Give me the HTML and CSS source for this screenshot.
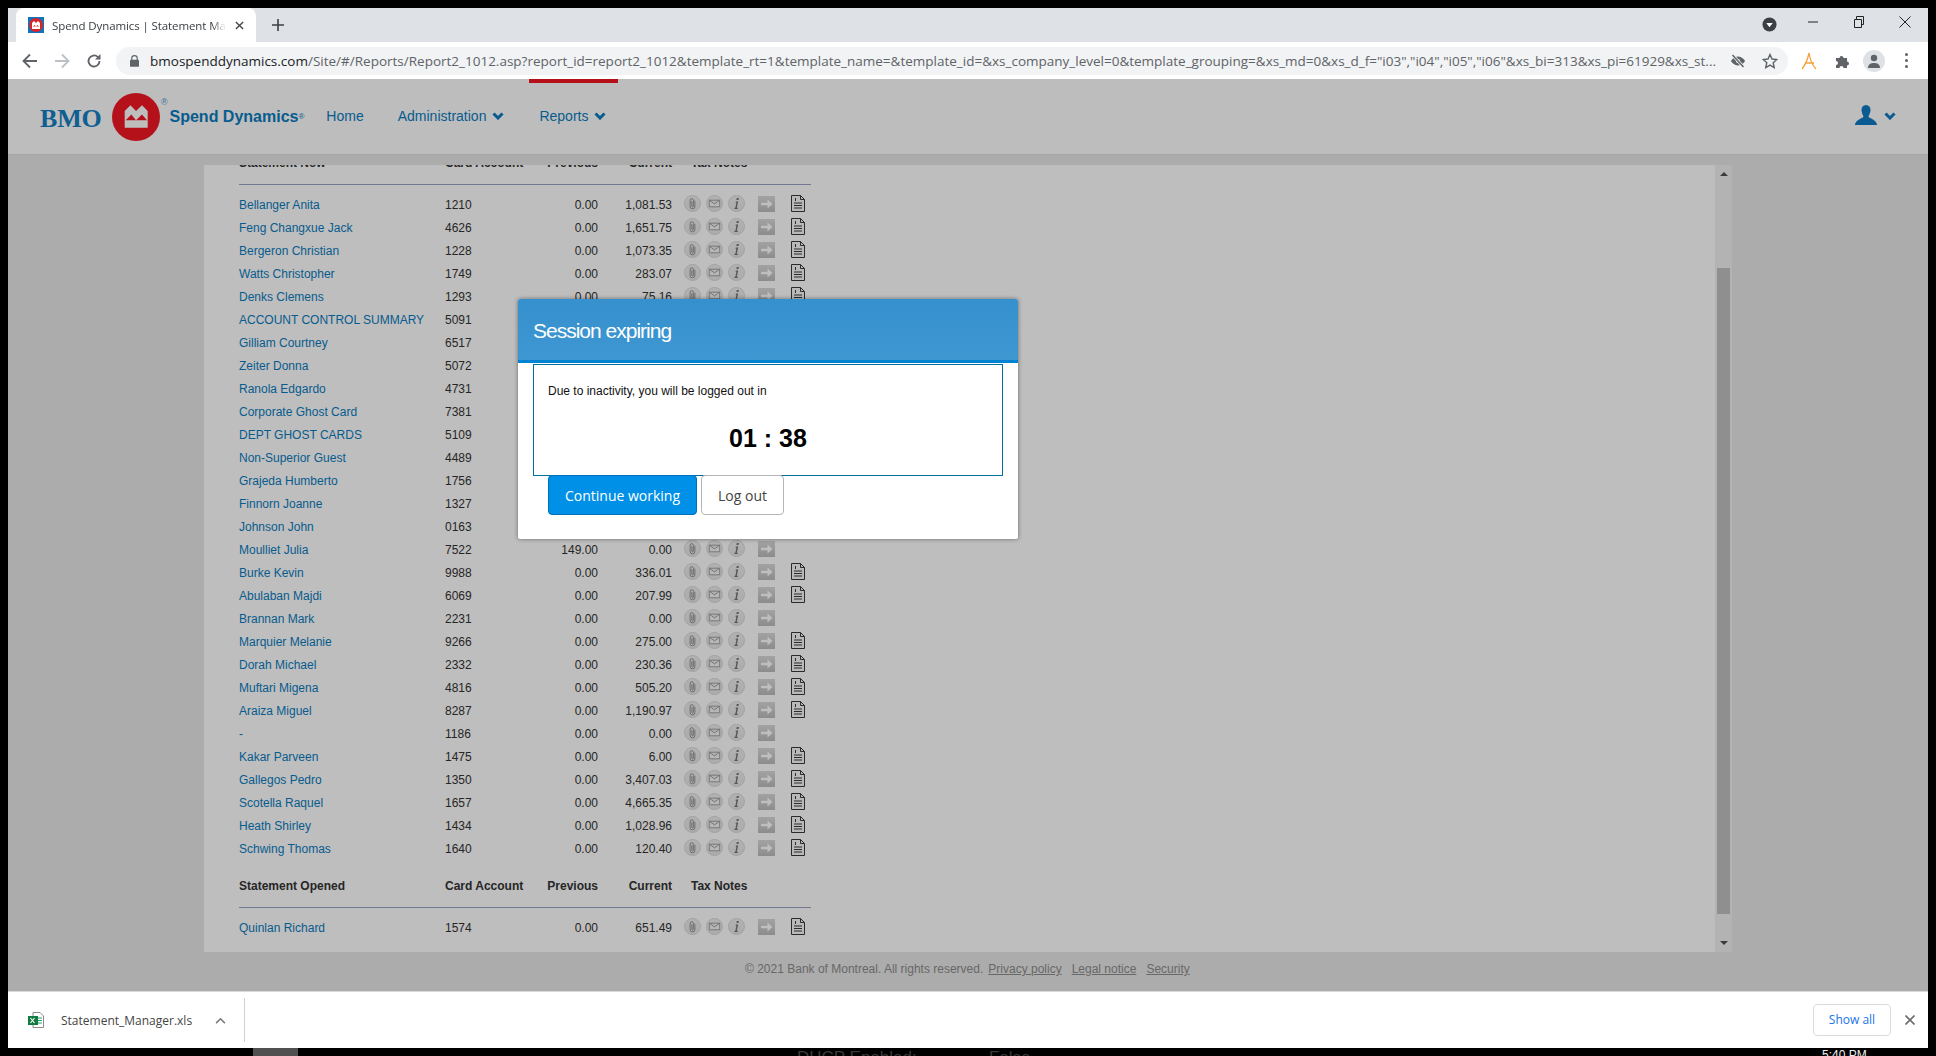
FILE: index.html
```html
<!DOCTYPE html>
<html>
<head lang="en">
    <meta charset="UTF-8">
    <title>Spend Dynamics | Statement Manager</title>
    <link rel="stylesheet" href="styles.css">
</head>
<body>
<svg class="defs" width="0" height="0">
    <defs>
        <linearGradient id="ballFill" x1="0" y1="0" x2="0" y2="1">
            <stop offset="0" stop-color="#efefef"/>
            <stop offset="1" stop-color="#e6e6e6"/>
        </linearGradient>
        <linearGradient id="goFill" x1="0" y1="0" x2="0" y2="1">
            <stop offset="0" stop-color="#dadada"/>
            <stop offset="1" stop-color="#bdbdbd"/>
        </linearGradient>
        <symbol id="clip" viewBox="0 0 18 18">
            <circle cx="9" cy="9" r="8.500" fill="url(#ballFill)" stroke="#d8d8d8"/>
            <path d="M11.500 6v6.200a2.500 2.500 0 0 1-5 0V5.600a1.700 1.700 0 0 1 3.400 0v6.200a.8.8 0 0 1-1.600 0V6.500" fill="none" stroke="#777" stroke-width=".8"/>
        </symbol>
        <symbol id="mail" viewBox="0 0 18 18">
            <circle cx="9" cy="9" r="8.500" fill="url(#ballFill)" stroke="#d8d8d8"/>
            <path d="M3.500 5.500h11v7h-11zM3.500 5.500 9 9.500l5.500-4" fill="#f6f6f6" stroke="#888" stroke-width=".8"/>
        </symbol>
        <symbol id="info" viewBox="0 0 18 18">
            <circle cx="9" cy="9" r="8.500" fill="url(#ballFill)" stroke="#d8d8d8"/>
            <path d="M9.300 3.200h2.200l-.4 2H8.900zM8.300 7h2.500l-1.500 6.500h1.200l-.3 1.300H6.700l.3-1.300h.8L8.900 8.300H8z" fill="#757575"/>
        </symbol>
        <symbol id="go" viewBox="0 0 17 16">
            <rect width="17" height="16" fill="url(#goFill)"/>
            <path d="M3 6.800h6.500V3.500l5 4.500-5 4.500V9.200H3z" fill="#fff"/>
        </symbol>
        <symbol id="doc" viewBox="0 0 14 17">
            <path d="M.5.500h9l4 4v12H.5z" fill="#f8f8f8" stroke="#3a3a3a"/>
            <path d="M9.500.500v4h4M3 8h8M3 10.500h8M3 13h8M4.500 3v3" fill="none" stroke="#3a3a3a"/>
        </symbol>
    </defs>
</svg>

<div class="frame">
    <div class="tabstrip">
        <div class="tab">
            <svg class="favicon" viewBox="0 0 16 16">
                <rect width="16" height="16" fill="#0f75bc"/>
                <circle cx="8" cy="8" r="7" fill="#d8232a"/>
                <path d="M4 12V6l2-2 2 2 2-2 2 2v6z" fill="#fff"/>
                <path d="M5 9.500l1.500-1.500L8 9.500l1.500-1.500 1.500 1.500z" fill="#d8232a"/>
            </svg>
            <span class="tab-title">Spend Dynamics | Statement Manager</span>
            <svg class="tab-close" viewBox="0 0 10 10"><path d="M1 1l8 8M9 1 1 9" stroke="#444" stroke-width="1.500"/></svg>
        </div>
        <svg class="new-tab" viewBox="0 0 12 12"><path d="M6 0v12M0 6h12" stroke="#3c4043" stroke-width="1.600"/></svg>
        <div class="strip-right">
            <svg class="tab-search" viewBox="0 0 16 16"><circle cx="8" cy="8" r="7.500" fill="#3c4043"/><path d="M4.500 6.500h7L8 11z" fill="#fff"/></svg>
            <div class="win-btn"><svg viewBox="0 0 12 12" width="12" height="12"><path d="M1 6h10" stroke="#222"/></svg></div>
            <div class="win-btn"><svg viewBox="0 0 12 12" width="12" height="12"><path d="M1.500 3.500h7v8h-7zM3.500 3.500v-3h7v8h-2" fill="none" stroke="#222"/></svg></div>
            <div class="win-btn"><svg viewBox="0 0 12 12" width="12" height="12"><path d="M.5.500l11 11M11.500.500l-11 11" stroke="#222"/></svg></div>
        </div>
    </div>

    <div class="toolbar">
        <svg class="tool" viewBox="0 0 16 16"><path d="M15 8H2M8 1.500 1.500 8 8 14.500" fill="none" stroke="#5f6368" stroke-width="1.800"/></svg>
        <svg class="tool" viewBox="0 0 16 16"><path d="M1 8h13M8 1.500 14.500 8 8 14.500" fill="none" stroke="#bcbfc3" stroke-width="1.800"/></svg>
        <svg class="tool" viewBox="0 0 16 16"><path d="M13.500 8a5.500 5.500 0 1 1-1.600-3.900" fill="none" stroke="#5f6368" stroke-width="1.800"/><path d="M14.500 1v5.500H9z" fill="#5f6368"/></svg>
        <div class="omnibox">
            <svg class="lock" viewBox="0 0 10 13"><path d="M2 5.500V3.500a3 3 0 0 1 6 0v2" fill="none" stroke="#5f6368" stroke-width="1.300"/><rect y="5" width="10" height="8" rx="1" fill="#5f6368"/></svg>
            <div class="url"><b>bmospenddynamics.com</b>/Site/#/Reports/Report2_1012.asp?report_id=report2_1012&amp;template_rt=1&amp;template_name=&amp;template_id=&amp;xs_company_level=0&amp;template_grouping=&amp;xs_md=0&amp;xs_d_f="i03","i04","i05","i06"&amp;xs_bi=313&amp;xs_pi=61929&amp;xs_st...</div>
            <svg class="omni-icon" viewBox="0 0 16 16"><path d="M1 8s2.500-4.500 7-4.500S15 8 15 8s-2.500 4.500-7 4.500S1 8 1 8z" fill="#5f6368"/><circle cx="8" cy="8" r="2" fill="#f1f3f4"/><path d="M2.500 2l11 12" stroke="#f1f3f4" stroke-width="3"/><path d="M2.500 2l11 12" stroke="#5f6368" stroke-width="1.500"/></svg>
            <svg class="omni-icon" viewBox="0 0 16 16"><path d="M8 1.500l2 4.500 4.800.5-3.600 3.200 1 4.800L8 12.100l-4.200 2.400 1-4.800L1.200 6.500 6 6z" fill="none" stroke="#5f6368" stroke-width="1.400"/></svg>
        </div>
        <svg class="tool acro" viewBox="0 0 16 18"><path d="M1 17C4 13 7 6 8 1c1 6 3 12 7 16M4 11h9" fill="none" stroke="#f3a33c" stroke-width="1.300"/></svg>
        <svg class="tool puzzle" viewBox="0 0 16 16"><path d="M1 5h3.500a2 2 0 1 1 4 0H12v3.500a2 2 0 1 1 0 4V15H8.500a2 2 0 1 0-4 0H1v-3a2 2 0 1 0 0-4z" fill="#5f6368"/></svg>
        <div class="avatar"><svg viewBox="0 0 14 14" width="14" height="14"><circle cx="7" cy="4" r="3.200" fill="#5f6368"/><path d="M1 14c0-4 3-5 6-5s6 1 6 5z" fill="#5f6368"/></svg></div>
        <div class="kebab"><i></i><i></i><i></i></div>
    </div>

    <div class="page">
        <header class="site-head">
            <div class="brand">
                <span class="bmo">BMO</span>
                <svg class="roundel" viewBox="0 0 48 48">
                    <circle cx="24" cy="24" r="24" fill="#f21824"/>
                    <path d="M12.700 34.700V18l5.700-5.700L24 18l6-5.700 5.700 5.700v16.700z" fill="#fff"/>
                    <path d="M13.700 27.300l5.700-5.700L24 27.300l6-5.700 5 5.700z" fill="#f21824"/>
                </svg>
                <span class="reg">®</span>
                <span class="product">Spend Dynamics<sup>®</sup></span>
            </div>
            <nav class="nav">
                <a class="nav-item">Home</a>
                <a class="nav-item admin">Administration <svg class="chev" viewBox="0 0 12 8"><path d="M1.500 1.500 6 6l4.500-4.500" fill="none" stroke="#0a7cc0" stroke-width="3"/></svg></a>
                <a class="nav-item active">Reports <svg class="chev" viewBox="0 0 12 8"><path d="M1.500 1.500 6 6l4.500-4.500" fill="none" stroke="#0a7cc0" stroke-width="3"/></svg></a>
            </nav>
            <div class="user">
                <svg class="user-icon" viewBox="0 0 22 20"><path d="M11 0c3 0 4.500 2.200 4.500 5S14 10 13.500 11.500c.5 2 8.500 3 8.500 8.500H0c0-5.500 8-6.500 8.500-8.500C8 10 6.500 7.800 6.500 5S8 0 11 0z" fill="#0f7bc4"/></svg>
                <svg class="chev" viewBox="0 0 12 8"><path d="M1.500 1.500 6 6l4.500-4.500" fill="none" stroke="#0f7bc4" stroke-width="3"/></svg>
            </div>
        </header>

        <main class="content">
            <section class="panel">
                <div class="report">
                    <div class="row heading"><span>Statement Now</span><span>Card Account</span><span class="num">Previous</span><span class="num">Current</span><span class="tax">Tax Notes</span></div>
                    <div class="rows">
                        <div class="row"><a>Bellanger Anita</a><span>1210</span><span class="num">0.00</span><span class="num">1,081.53</span><div class="acts"><svg class="ball"><use href="#clip"/></svg><svg class="ball"><use href="#mail"/></svg><svg class="ball"><use href="#info"/></svg><svg class="go"><use href="#go"/></svg><svg class="doc"><use href="#doc"/></svg></div></div>
                        <div class="row"><a>Feng Changxue Jack</a><span>4626</span><span class="num">0.00</span><span class="num">1,651.75</span><div class="acts"><svg class="ball"><use href="#clip"/></svg><svg class="ball"><use href="#mail"/></svg><svg class="ball"><use href="#info"/></svg><svg class="go"><use href="#go"/></svg><svg class="doc"><use href="#doc"/></svg></div></div>
                        <div class="row"><a>Bergeron Christian</a><span>1228</span><span class="num">0.00</span><span class="num">1,073.35</span><div class="acts"><svg class="ball"><use href="#clip"/></svg><svg class="ball"><use href="#mail"/></svg><svg class="ball"><use href="#info"/></svg><svg class="go"><use href="#go"/></svg><svg class="doc"><use href="#doc"/></svg></div></div>
                        <div class="row"><a>Watts Christopher</a><span>1749</span><span class="num">0.00</span><span class="num">283.07</span><div class="acts"><svg class="ball"><use href="#clip"/></svg><svg class="ball"><use href="#mail"/></svg><svg class="ball"><use href="#info"/></svg><svg class="go"><use href="#go"/></svg><svg class="doc"><use href="#doc"/></svg></div></div>
                        <div class="row"><a>Denks Clemens</a><span>1293</span><span class="num">0.00</span><span class="num">75.16</span><div class="acts"><svg class="ball"><use href="#clip"/></svg><svg class="ball"><use href="#mail"/></svg><svg class="ball"><use href="#info"/></svg><svg class="go"><use href="#go"/></svg><svg class="doc"><use href="#doc"/></svg></div></div>
                        <div class="row"><a>ACCOUNT CONTROL SUMMARY</a><span>5091</span></div>
                        <div class="row"><a>Gilliam Courtney</a><span>6517</span></div>
                        <div class="row"><a>Zeiter Donna</a><span>5072</span></div>
                        <div class="row"><a>Ranola Edgardo</a><span>4731</span></div>
                        <div class="row"><a>Corporate Ghost Card</a><span>7381</span></div>
                        <div class="row"><a>DEPT GHOST CARDS</a><span>5109</span></div>
                        <div class="row"><a>Non-Superior Guest</a><span>4489</span></div>
                        <div class="row"><a>Grajeda Humberto</a><span>1756</span></div>
                        <div class="row"><a>Finnorn Joanne</a><span>1327</span></div>
                        <div class="row"><a>Johnson John</a><span>0163</span></div>
                        <div class="row"><a>Moulliet Julia</a><span>7522</span><span class="num">149.00</span><span class="num">0.00</span><div class="acts"><svg class="ball"><use href="#clip"/></svg><svg class="ball"><use href="#mail"/></svg><svg class="ball"><use href="#info"/></svg><svg class="go"><use href="#go"/></svg></div></div>
                        <div class="row"><a>Burke Kevin</a><span>9988</span><span class="num">0.00</span><span class="num">336.01</span><div class="acts"><svg class="ball"><use href="#clip"/></svg><svg class="ball"><use href="#mail"/></svg><svg class="ball"><use href="#info"/></svg><svg class="go"><use href="#go"/></svg><svg class="doc"><use href="#doc"/></svg></div></div>
                        <div class="row"><a>Abulaban Majdi</a><span>6069</span><span class="num">0.00</span><span class="num">207.99</span><div class="acts"><svg class="ball"><use href="#clip"/></svg><svg class="ball"><use href="#mail"/></svg><svg class="ball"><use href="#info"/></svg><svg class="go"><use href="#go"/></svg><svg class="doc"><use href="#doc"/></svg></div></div>
                        <div class="row"><a>Brannan Mark</a><span>2231</span><span class="num">0.00</span><span class="num">0.00</span><div class="acts"><svg class="ball"><use href="#clip"/></svg><svg class="ball"><use href="#mail"/></svg><svg class="ball"><use href="#info"/></svg><svg class="go"><use href="#go"/></svg></div></div>
                        <div class="row"><a>Marquier Melanie</a><span>9266</span><span class="num">0.00</span><span class="num">275.00</span><div class="acts"><svg class="ball"><use href="#clip"/></svg><svg class="ball"><use href="#mail"/></svg><svg class="ball"><use href="#info"/></svg><svg class="go"><use href="#go"/></svg><svg class="doc"><use href="#doc"/></svg></div></div>
                        <div class="row"><a>Dorah Michael</a><span>2332</span><span class="num">0.00</span><span class="num">230.36</span><div class="acts"><svg class="ball"><use href="#clip"/></svg><svg class="ball"><use href="#mail"/></svg><svg class="ball"><use href="#info"/></svg><svg class="go"><use href="#go"/></svg><svg class="doc"><use href="#doc"/></svg></div></div>
                        <div class="row"><a>Muftari Migena</a><span>4816</span><span class="num">0.00</span><span class="num">505.20</span><div class="acts"><svg class="ball"><use href="#clip"/></svg><svg class="ball"><use href="#mail"/></svg><svg class="ball"><use href="#info"/></svg><svg class="go"><use href="#go"/></svg><svg class="doc"><use href="#doc"/></svg></div></div>
                        <div class="row"><a>Araiza Miguel</a><span>8287</span><span class="num">0.00</span><span class="num">1,190.97</span><div class="acts"><svg class="ball"><use href="#clip"/></svg><svg class="ball"><use href="#mail"/></svg><svg class="ball"><use href="#info"/></svg><svg class="go"><use href="#go"/></svg><svg class="doc"><use href="#doc"/></svg></div></div>
                        <div class="row"><a>-</a><span>1186</span><span class="num">0.00</span><span class="num">0.00</span><div class="acts"><svg class="ball"><use href="#clip"/></svg><svg class="ball"><use href="#mail"/></svg><svg class="ball"><use href="#info"/></svg><svg class="go"><use href="#go"/></svg></div></div>
                        <div class="row"><a>Kakar Parveen</a><span>1475</span><span class="num">0.00</span><span class="num">6.00</span><div class="acts"><svg class="ball"><use href="#clip"/></svg><svg class="ball"><use href="#mail"/></svg><svg class="ball"><use href="#info"/></svg><svg class="go"><use href="#go"/></svg><svg class="doc"><use href="#doc"/></svg></div></div>
                        <div class="row"><a>Gallegos Pedro</a><span>1350</span><span class="num">0.00</span><span class="num">3,407.03</span><div class="acts"><svg class="ball"><use href="#clip"/></svg><svg class="ball"><use href="#mail"/></svg><svg class="ball"><use href="#info"/></svg><svg class="go"><use href="#go"/></svg><svg class="doc"><use href="#doc"/></svg></div></div>
                        <div class="row"><a>Scotella Raquel</a><span>1657</span><span class="num">0.00</span><span class="num">4,665.35</span><div class="acts"><svg class="ball"><use href="#clip"/></svg><svg class="ball"><use href="#mail"/></svg><svg class="ball"><use href="#info"/></svg><svg class="go"><use href="#go"/></svg><svg class="doc"><use href="#doc"/></svg></div></div>
                        <div class="row"><a>Heath Shirley</a><span>1434</span><span class="num">0.00</span><span class="num">1,028.96</span><div class="acts"><svg class="ball"><use href="#clip"/></svg><svg class="ball"><use href="#mail"/></svg><svg class="ball"><use href="#info"/></svg><svg class="go"><use href="#go"/></svg><svg class="doc"><use href="#doc"/></svg></div></div>
                        <div class="row"><a>Schwing Thomas</a><span>1640</span><span class="num">0.00</span><span class="num">120.40</span><div class="acts"><svg class="ball"><use href="#clip"/></svg><svg class="ball"><use href="#mail"/></svg><svg class="ball"><use href="#info"/></svg><svg class="go"><use href="#go"/></svg><svg class="doc"><use href="#doc"/></svg></div></div>
                    </div>
                    <div class="row heading second"><span>Statement Opened</span><span>Card Account</span><span class="num">Previous</span><span class="num">Current</span><span class="tax">Tax Notes</span></div>
                    <div class="rows">
                        <div class="row"><a>Quinlan Richard</a><span>1574</span><span class="num">0.00</span><span class="num">651.49</span><div class="acts"><svg class="ball"><use href="#clip"/></svg><svg class="ball"><use href="#mail"/></svg><svg class="ball"><use href="#info"/></svg><svg class="go"><use href="#go"/></svg><svg class="doc"><use href="#doc"/></svg></div></div>
                    </div>
                </div>
                <div class="scrollbar">
                    <span class="arrow up"></span>
                    <div class="track"><div class="thumb"></div></div>
                    <span class="arrow down"></span>
                </div>
            </section>
            <footer class="legal">
                <span class="copy">© 2021 Bank of Montreal. All rights reserved.</span>
                <a>Privacy policy</a>
                <a>Legal notice</a>
                <a>Security</a>
            </footer>
        </main>

        <div class="backdrop"></div>

        <div class="modal">
            <h2 class="modal-title">Session expiring</h2>
            <div class="modal-box">
                <p class="modal-text">Due to inactivity, you will be logged out in</p>
                <div class="countdown">01 : 38</div>
            </div>
            <div class="modal-actions">
                <button class="btn primary">Continue working</button>
                <button class="btn">Log out</button>
            </div>
        </div>
    </div>

    <div class="downloads">
        <svg class="xls" viewBox="0 0 16 16">
            <path d="M5 .500h7l3.500 3.500v11.500H5z" fill="#fff" stroke="#8a8a8a"/>
            <path d="M10 6h4M10 8.500h4M10 11h4" stroke="#21a366"/>
            <rect y="4" width="10" height="9" fill="#107c41"/>
            <path d="M2.500 6l4 5M6.500 6l-4 5" stroke="#fff" stroke-width="1.200"/>
        </svg>
        <span class="file-name">Statement_Manager.xls</span>
        <svg class="file-chev" viewBox="0 0 12 8"><path d="M1 7l5-5 5 5" fill="none" stroke="#7a7a7a" stroke-width="1.800"/></svg>
        <div class="divider"></div>
        <div class="show-all">Show all</div>
        <svg class="bar-close" viewBox="0 0 10 10"><path d="M.5.500l9 9M9.500.500l-9 9" stroke="#6b6b6b" stroke-width="1.600"/></svg>
    </div>
</div>

<div class="desktop">
    <span class="task-btn"></span>
    <span class="desk-a">DHCP Enabled:</span>
    <span class="desk-b">False</span>
    <span class="desk-c">5:40 PM</span>
</div>
</body>
</html>
```

FILE: styles.css
```css
*{
    margin: 0;
    padding: 0;
    box-sizing: border-box;
}
html, body{
    width: 1936px;
    height: 1056px;
    overflow: hidden;
    background: #000;
}
body{
    padding: 8px 8px 0;
    font-family: "Liberation Sans", Arial, sans-serif;
    font-size: 12px;
    position: relative;
}
.defs{
    position: absolute;
}
.frame{
    width: 1920px;
    height: 1040px;
    display: flex;
    flex-direction: column;
    background: #fff;
}

/* browser chrome */
.tabstrip{
    height: 34px;
    flex: none;
    display: flex;
    align-items: flex-end;
    background: #dee1e6;
    padding-left: 8px;
}
.tab{
    width: 240px;
    height: 34px;
    background: #fff;
    border-radius: 8px 8px 0 0;
    display: flex;
    align-items: center;
    padding: 0 12px;
    color: #3c4043;
    font-family: "Open Sans", sans-serif;
}
.favicon{
    width: 16px;
    height: 16px;
    flex: none;
}
.tab-title{
    width: 174px;
    margin-left: 8px;
    white-space: nowrap;
    overflow: hidden;
    font-size: 11.5px;
    letter-spacing: -.1px;
    -webkit-mask-image: linear-gradient(90deg, #000 92%, transparent);
    mask-image: linear-gradient(90deg, #000 92%, transparent);
}
.tab-close{
    width: 9px;
    height: 9px;
    margin-left: 9px;
}
.new-tab{
    width: 12px;
    height: 12px;
    margin: 0 0 11px 16px;
}
.strip-right{
    margin-left: auto;
    height: 34px;
    display: flex;
    align-items: flex-start;
}
.tab-search{
    width: 15px;
    height: 15px;
    margin: 9px 13px 0 0;
}
.win-btn{
    width: 46px;
    height: 28px;
    display: flex;
    align-items: center;
    justify-content: center;
}
.toolbar{
    height: 37px;
    flex: none;
    display: flex;
    align-items: center;
    background: #fff;
    position: relative;
}
.tool{
    width: 16px;
    height: 16px;
    flex: none;
}
.toolbar .tool:nth-child(1){
    margin-left: 14px;
}
.toolbar .tool:nth-child(2){
    margin-left: 16px;
}
.toolbar .tool:nth-child(3){
    margin-left: 16px;
}
.omnibox{
    width: 1672px;
    height: 28px;
    margin-left: 14px;
    background: #f1f3f4;
    border-radius: 14px;
    display: flex;
    align-items: center;
    padding-left: 14px;
    color: #5f6368;
}
.lock{
    width: 9px;
    height: 12px;
    flex: none;
}
.url{
    width: 1572px;
    margin-left: 11px;
    white-space: nowrap;
    overflow: hidden;
    font-family: "Open Sans", sans-serif;
    font-size: 13.5px;
}
.url b{
    font-weight: 400;
    color: #202124;
}
.omni-icon{
    width: 16px;
    height: 16px;
    flex: none;
    margin-left: 16px;
}
.url + .omni-icon{
    margin-left: 8px;
}
.acro{
    margin-left: 13px;
    height: 18px;
}
.puzzle{
    margin-left: 18px;
}
.avatar{
    width: 22px;
    height: 22px;
    margin-left: 12px;
    border-radius: 50%;
    background: #dee1e6;
    display: flex;
    align-items: center;
    justify-content: center;
}
.kebab{
    margin-left: 20px;
    display: flex;
    flex-direction: column;
    gap: 3px;
}
.kebab i{
    display: block;
    width: 3px;
    height: 3px;
    border-radius: 50%;
    background: #5f6368;
}

/* page */
.page{
    height: 912px;
    flex: none;
    position: relative;
    background: #e7e7e7;
    display: flex;
    flex-direction: column;
    overflow: hidden;
}
.site-head{
    height: 76px;
    flex: none;
    background: #fefefe;
    border-bottom: 1px solid #e0e0e0;
    display: flex;
    align-items: center;
    color: #0a7cc0;
}
.brand{
    display: flex;
    align-items: center;
    margin-left: 32px;
    position: relative;
}
.bmo{
    font-family: "Liberation Serif", serif;
    font-weight: 700;
    font-size: 26px;
    color: #1480c4;
    margin-top: 5px;
    letter-spacing: -.2px;
}
.roundel{
    width: 48px;
    height: 48px;
    margin-left: 10px;
}
.reg{
    position: absolute;
    left: 121px;
    top: 4px;
    font-size: 9px;
    color: #4a9bd0;
}
.product{
    margin-left: 10px;
    font-size: 16px;
    font-weight: 700;
    color: #0a7cc0;
}
.product sup{
    font-size: 8px;
    font-weight: 400;
    vertical-align: 3px;
    line-height: 0;
}
.nav{
    display: flex;
    height: 75px;
    margin-left: 11px;
}
.nav-item{
    display: flex;
    align-items: center;
    padding: 0 11px 5px;
    font-size: 14px;
    white-space: nowrap;
    border-top: 4px solid transparent;
    margin-right: 12px;
}
.nav-item .chev{
    margin-left: 6px;
}
.nav-item.admin{
    margin-right: 14px;
}
.nav-item.active{
    padding-left: 10px;
    padding-right: 12px;
    border-top-color: #f21824;
}
.chev{
    width: 12px;
    height: 8px;
    flex: none;
}
.user{
    margin-left: auto;
    margin-right: 32px;
    display: flex;
    align-items: center;
    gap: 7px;
}
.user-icon{
    width: 22px;
    height: 20px;
    margin-bottom: 4px;
}
.user .chev{
    margin-bottom: 2px;
}
.content{
    flex: 1;
    padding: 10px 196px 0;
    display: flex;
    flex-direction: column;
}
.panel{
    width: 1528px;
    height: 787px;
    flex: none;
    background: #fff;
    display: flex;
    overflow: hidden;
}
.report{
    flex: 1;
    padding-left: 35px;
    margin-top: -13px;
}
.row{
    display: grid;
    grid-template-columns: 206px 78px 75px 74px 139px;
    height: 23px;
    line-height: 23px;
    color: #333;
    white-space: nowrap;
}
.row a{
    color: #0a7cc0;
}
.num{
    text-align: right;
}
.heading{
    font-weight: 700;
    width: 572px;
    height: 33px;
    border-bottom: 1px solid #9ba3c4;
}
.heading .tax{
    padding-left: 19px;
}
.second{
    margin-top: 14px;
}
.rows{
    padding-top: 9px;
}
.acts{
    display: flex;
    align-items: center;
    height: 23px;
    margin-top: -2px;
    padding-left: 12px;
}
.acts svg{
    flex: none;
    display: block;
}
.ball{
    width: 17px;
    height: 17px;
    margin-right: 5px;
}
.go{
    width: 17px;
    height: 16px;
    margin-left: 8px;
    margin-right: 16px;
}
.doc{
    width: 14px;
    height: 17px;
}
.scrollbar{
    width: 17px;
    flex: none;
    display: flex;
    flex-direction: column;
    align-items: center;
    background: #f1f1f1;
}
.arrow{
    width: 0;
    height: 0;
    flex: none;
    border-left: 4px solid transparent;
    border-right: 4px solid transparent;
    margin: 7px 0;
}
.arrow.up{
    border-bottom: 4px solid #505050;
}
.arrow.down{
    border-top: 4px solid #505050;
}
.track{
    flex: 1;
    width: 13px;
    padding-top: 85px;
}
.thumb{
    height: 646px;
    background: #c1c1c1;
}
.legal{
    height: 39px;
    display: flex;
    align-items: center;
    gap: 10px;
    color: #8c8c8c;
    padding: 0 0 5px 541px;
}
.legal .copy{
    margin-right: -5px;
}
.legal a{
    text-decoration: underline;
}

/* session dialog */
.backdrop{
    position: absolute;
    left: 0;
    top: 0;
    right: 0;
    bottom: 0;
    background: rgba(0, 0, 0, .255);
}
.modal{
    position: absolute;
    left: 510px;
    top: 220px;
    width: 500px;
    height: 240px;
    background: #fff;
    border-radius: 2px;
    box-shadow: 0 0 4px rgba(0, 0, 0, .45);
}
.modal-title{
    height: 64px;
    padding: 0 15px;
    line-height: 64px;
    font-size: 21px;
    font-weight: 400;
    letter-spacing: -1px;
    color: #fff;
    background: linear-gradient(#3690cd, #3e97d1);
    border-bottom: 3px solid #0083d0;
    border-radius: 2px 2px 0 0;
}
.modal-box{
    width: 470px;
    height: 112px;
    margin: 1px 0 0 15px;
    padding: 17px 14px 0;
    border: 1px solid #006f99;
}
.modal-text{
    font-size: 12px;
    line-height: 18px;
    color: #111;
}
.countdown{
    margin-top: 20px;
    text-align: center;
    font-size: 25px;
    font-weight: 700;
    line-height: 36px;
    color: #000;
}
.modal-actions{
    display: flex;
    gap: 4px;
    padding-left: 30px;
}
.btn{
    height: 40px;
    width: 83px;
    margin-top: -1px;
    font-family: "Open Sans", sans-serif;
    font-size: 14px;
    color: #444;
    background: #fff;
    border: 1px solid #b5b5b5;
    border-radius: 4px;
}
.btn.primary{
    width: 149px;
    color: #fff;
    background: #0090e8;
    border-color: #0070b8;
}

/* download shelf */
.downloads{
    flex: 1;
    display: flex;
    align-items: center;
    background: #fff;
    border-top: 1px solid #d8d8d8;
    font-family: "Open Sans", sans-serif;
    padding-left: 20px;
}
.xls{
    width: 16px;
    height: 16px;
    flex: none;
}
.file-name{
    width: 132px;
    margin-left: 17px;
    font-size: 12px;
    color: #444;
    white-space: nowrap;
}
.file-chev{
    width: 11px;
    height: 7px;
    margin-left: 22px;
}
.divider{
    width: 1px;
    height: 44px;
    margin-left: 18px;
    background: #d0d0d0;
}
.show-all{
    margin-left: auto;
    width: 78px;
    height: 32px;
    line-height: 29px;
    text-align: center;
    font-size: 12px;
    color: #1a73e8;
    border: 1px solid #dadce0;
    border-radius: 4px;
}
.bar-close{
    width: 10px;
    height: 10px;
    margin: 0 13px 0 14px;
}

/* bit of the desktop under the window */
.desktop{
    position: absolute;
    left: 0;
    right: 0;
    top: 1048px;
    height: 8px;
    overflow: hidden;
    font-size: 17px;
    color: #3a3a3a;
}
.desktop span{
    position: absolute;
    top: 0;
    white-space: nowrap;
}
.task-btn{
    left: 253px;
    width: 45px;
    height: 8px;
    background: #505050;
}
.desk-a{
    left: 797px;
}
.desk-b{
    left: 989px;
}
.desk-c{
    left: 1822px;
    font-size: 12px;
    color: #eee;
}
```
